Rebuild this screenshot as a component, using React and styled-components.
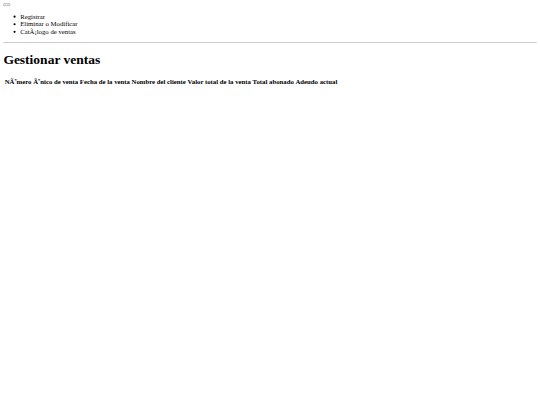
import React from "react";
import styled, { createGlobalStyle } from "styled-components";

// the reference is a 1280px wide page photographed at 540px:
// lay it out at full size and scale the whole sheet down once
const SCALE = 540 / 1280;

const GlobalStyle = createGlobalStyle`
  html, body {
    margin: 0;
    overflow: hidden;
    background: #fff;
  }
`;

const Viewport = styled.div`
  width: 540px;
  height: 405px;
  overflow: hidden;
`;

const Sheet = styled.div`
  width: 1280px;
  padding: 8px;
  box-sizing: border-box;
  transform: scale(${SCALE});
  transform-origin: 0 0;
  font-family: "Liberation Serif", "Times New Roman", serif;
  font-size: 16px;
  line-height: normal;
  color: #000;
`;

const TopNav = styled.nav`
  display: block;
`;

const MenuToggle = styled.button`
  display: block;
  width: 16px;
  height: 6px;
  padding: 1px 6px;
  border: 1px solid #767676;
  border-radius: 2px;
  background: #efefef;
`;

const NavList = styled.ul`
  margin: 16px 0;
  padding-left: 40px;
  list-style: disc;
`;

const NavItem = styled.li`
  line-height: normal;
`;

const Divider = styled.hr`
  margin: 8px 0;
  height: 0;
  border: 0;
  border-top: 1px solid #8a8a8a;
  border-bottom: 1px solid #c8c8c8;
`;

const Title = styled.h1`
  font-size: 32px;
  font-weight: bold;
  margin: 21.44px 0;
`;

const SalesTable = styled.table`
  border-collapse: separate;
  border-spacing: 2px;
`;

const HeaderCell = styled.th`
  padding: 1px;
  font-weight: bold;
  text-align: center;
  white-space: nowrap;
`;

const menu = ["Registrar", "Eliminar o Modificar", "CatÃ¡logo de ventas"];

const columns = [
  "NÃºmero Ãºnico de venta",
  "Fecha de la venta",
  "Nombre del cliente",
  "Valor total de la venta",
  "Total abonado",
  "Adeudo actual",
];

export default function App() {
  return (
    <Viewport>
      <GlobalStyle />
      <Sheet>
        <TopNav>
          <MenuToggle type="button" />
          <NavList>
            {menu.map((item) => (
              <NavItem key={item}>{item}</NavItem>
            ))}
          </NavList>
        </TopNav>
        <Divider />
        <Title>Gestionar ventas</Title>
        <SalesTable>
          <thead>
            <tr>
              {columns.map((col) => (
                <HeaderCell key={col}>{col}</HeaderCell>
              ))}
            </tr>
          </thead>
          <tbody />
        </SalesTable>
      </Sheet>
    </Viewport>
  );
}
